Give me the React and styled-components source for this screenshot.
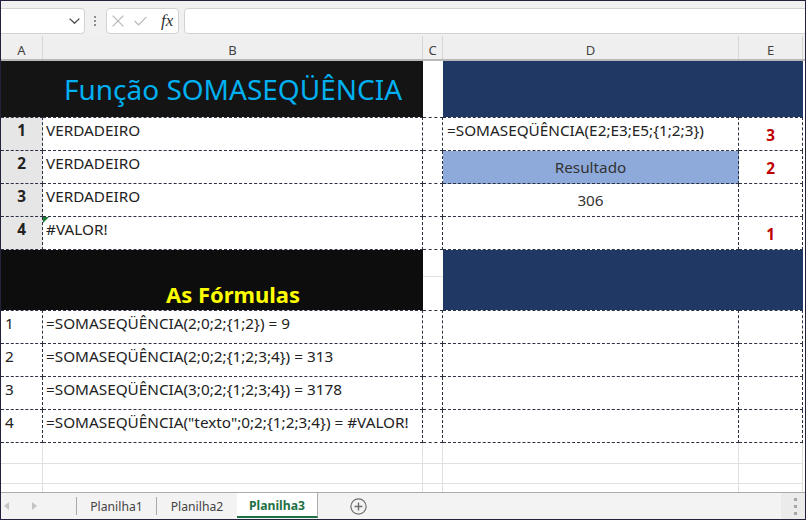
import React from 'react';
import styled, { createGlobalStyle } from 'styled-components';

const COLS = '42px 380px 20px 296px 64px 1fr';
const DASH = '1px dashed #2b3140';
const GRID = '1px solid #e0e0e0';

const Global = createGlobalStyle`
  html, body { margin: 0; padding: 0; background: #ffffff; }
  body { font-family: "Noto Sans", "Open Sans", sans-serif; }
  *, *::before, *::after { box-sizing: border-box; }
`;

const Window = styled.div`
  width: 806px;
  height: 520px;
  border: 1px solid #22223d;
  background: #ffffff;
  display: flex;
  flex-direction: column;
  overflow: hidden;
`;

/* ---------- formula bar ---------- */
const FormulaBar = styled.div`
  flex: none;
  height: 35px;
  background: #f0f0f0;
  display: flex;
  align-items: flex-start;
  padding-top: 7px;
  overflow: hidden;
`;

const NameBox = styled.div`
  flex: none;
  width: 90px;
  height: 26px;
  margin-left: -6px;
  background: #ffffff;
  border: 1px solid #d2d2d2;
  border-radius: 4px;
  display: flex;
  align-items: center;
  justify-content: flex-end;
  padding-right: 4px;
`;

const Grip = styled.div`
  flex: none;
  width: 2px;
  height: 26px;
  margin: 0 10px 0 9px;
  display: flex;
  flex-direction: column;
  justify-content: center;
  gap: 2px;
  & > span { display: block; width: 2px; height: 2px; background: #8c8c8c; }
`;

const FxBox = styled.div`
  flex: none;
  width: 73px;
  height: 26px;
  background: #ffffff;
  border: 1px solid #d2d2d2;
  border-radius: 4px;
  display: flex;
  align-items: center;
  padding-left: 5px;
`;

const FxLabel = styled.span`
  font-family: "Liberation Serif", "DejaVu Serif", serif;
  font-style: italic;
  font-size: 17px;
  color: #333333;
  margin-left: 14px;
  line-height: 1;
  margin-top: -2px;
`;

const InputBox = styled.div`
  flex: 1;
  height: 26px;
  margin-left: 5px;
  margin-right: -10px;
  background: #ffffff;
  border: 1px solid #d2d2d2;
  border-radius: 4px;
`;

/* ---------- column headers ---------- */
const HeaderRow = styled.div`
  flex: none;
  display: grid;
  grid-template-columns: ${COLS};
  height: 25px;
  background: #efefef;
  border-bottom: 2px solid #b9b9b9;
`;

const HeaderCell = styled.div`
  text-align: center;
  font-size: 13px;
  line-height: 18px;
  padding-top: 5px;
  color: #444444;
  border-right: ${p => (p.$last ? 'none' : '1px solid #d6d6d6')};
`;

/* ---------- sheet ---------- */
const Sheet = styled.div`
  flex: 1;
  overflow: hidden;
  display: flex;
  flex-direction: column;
`;

const Row = styled.div`
  flex: none;
  display: grid;
  grid-template-columns: ${COLS};
  height: ${p => p.$h}px;
`;

const lineFor = l => (l === 'dash' ? DASH : l === 'grid' ? GRID : 'none');

const Cell = styled.div`
  position: relative;
  min-width: 0;
  background: ${p => p.$bg || 'transparent'};
  border-right: ${p => lineFor(p.$line)};
  border-bottom: ${p => lineFor(p.$bottom || p.$line)};
  border-top: ${p => (p.$top ? DASH : 'none')};
  font-size: 15.3px;
  line-height: 20px;
  color: #222222;
  padding: 2px 0 0 3px;
  white-space: nowrap;
  ${p => (p.$span ? `grid-column: span ${p.$span};` : '')}
`;

const IndexCell = styled(Cell)`
  background: #e7e6e6;
  font-weight: 700;
  text-align: center;
  padding-left: 0;
`;

const NumCell = styled(Cell)`
  padding-left: 4px;
`;

const FormulaCell = styled(Cell)`
  padding-left: 4px;
`;

const CenterCell = styled(Cell)`
  display: flex;
  align-items: center;
  justify-content: center;
  padding: 0;
  color: #333333;
`;

const MarkCell = styled(CenterCell)`
  color: #c00000;
  font-weight: 700;
  padding-top: 2px;
`;

const ErrorCell = styled(Cell)`
  &::before {
    content: '';
    position: absolute;
    left: 0;
    top: 0;
    border-top: 6px solid #1e7b34;
    border-right: 6px solid transparent;
  }
`;

const TitleCell = styled.div`
  background: #141414;
  display: flex;
  align-items: center;
  justify-content: center;
  font-size: 28px;
  color: #00b0f0;
  white-space: nowrap;
`;

const BlackCell = styled.div`
  background: ${p => p.$bg || '#141414'};
  ${p => (p.$span ? `grid-column: span ${p.$span};` : '')}
`;

const NavyCell = styled.div`
  background: #203864;
  grid-column: span 2;
`;

const GapCell = styled.div`
  background: #ffffff;
  border-bottom: ${p => (p.$grid ? GRID : 'none')};
`;

const HeadingCell = styled.div`
  background: #0d0d0d;
  display: flex;
  align-items: flex-end;
  justify-content: center;
  padding-bottom: 1px;
  font-size: 22px;
  font-weight: 700;
  color: #ffff00;
  white-space: nowrap;
`;

/* ---------- sheet tabs ---------- */
const TabBar = styled.div`
  flex: none;
  height: 27px;
  background: #f3f3f3;
  border-top: 1px solid #ababab;
  display: flex;
  align-items: stretch;
`;

const NavArea = styled.div`
  flex: none;
  width: 75px;
  display: flex;
  align-items: center;
  padding-left: 3px;
  gap: 23px;
`;

const Sep = styled.div`
  flex: none;
  width: 1px;
  height: 18px;
  align-self: center;
  background: #a8a8a8;
`;

const Tab = styled.div`
  flex: none;
  width: ${p => p.$w}px;
  display: flex;
  align-items: center;
  justify-content: center;
  font-size: 12.2px;
  color: #444444;
  white-space: nowrap;
`;

const ActiveTab = styled(Tab)`
  background: #ffffff;
  color: #1e7145;
  font-weight: 700;
  border-right: 1px solid #ababab;
  border-bottom: 2px solid #1e7145;
  margin-bottom: 1px;
  padding-top: 1px;
`;

const AddButton = styled.div`
  flex: none;
  margin-left: 32px;
  display: flex;
  align-items: center;
`;

const Corner = styled.div`
  flex: none;
  margin-left: auto;
  width: 24px;
  background: #ebebeb;
  display: flex;
  flex-direction: column;
  justify-content: center;
  align-items: flex-start;
  padding-left: 13px;
  gap: 4px;
  & > span { display: block; width: 3px; height: 3px; background: #a6a6a6; }
`;

const Tri = ({ dir }) => (
  <svg width="5" height="8" viewBox="0 0 5 8">
    {dir === 'left' ? (
      <path d="M5 0 L0 4 L5 8 Z" fill="#c4c4c4" />
    ) : (
      <path d="M0 0 L5 4 L0 8 Z" fill="#c4c4c4" />
    )}
  </svg>
);

const sectionOne = [
  { n: '1', b: 'VERDADEIRO', d: '=SOMASEQÜÊNCIA(E2;E3;E5;{1;2;3})', dk: 'formula', e: '3' },
  { n: '2', b: 'VERDADEIRO', d: 'Resultado', dk: 'result', e: '2' },
  { n: '3', b: 'VERDADEIRO', d: '306', dk: 'center', e: '' },
  { n: '4', b: '#VALOR!', d: '', dk: 'formula', e: '1', err: true },
];

const formulas = [
  '=SOMASEQÜÊNCIA(2;0;2;{1;2}) = 9',
  '=SOMASEQÜÊNCIA(2;0;2;{1;2;3;4}) = 313',
  '=SOMASEQÜÊNCIA(3;0;2;{1;2;3;4}) = 3178',
  '=SOMASEQÜÊNCIA("texto";0;2;{1;2;3;4}) = #VALOR!',
];

const DCell = ({ row, top }) => {
  if (row.dk === 'result')
    return <CenterCell $line="dash" $top={top} $bg="#8eaadb">{row.d}</CenterCell>;
  if (row.dk === 'center')
    return <CenterCell $line="dash" $top={top}>{row.d}</CenterCell>;
  return <FormulaCell $line="dash" $top={top}>{row.d}</FormulaCell>;
};

export default function App() {
  return (
    <>
      <Global />
      <Window>
        <FormulaBar>
          <NameBox>
            <svg width="11" height="6" viewBox="0 0 11 6">
              <path d="M0.6 0.6 L5.5 5.2 L10.4 0.6" fill="none" stroke="#444" strokeWidth="1.3" />
            </svg>
          </NameBox>
          <Grip><span /><span /><span /></Grip>
          <FxBox>
            <svg width="12" height="12" viewBox="0 0 12 12">
              <path d="M0.6 0.6 L11.4 11.4 M11.4 0.6 L0.6 11.4" stroke="#b8b8b8" strokeWidth="1.2" fill="none" />
            </svg>
            <svg width="13" height="10" viewBox="0 0 13 10" style={{ marginLeft: 10 }}>
              <path d="M0.6 5 L4.6 9 L12.4 0.8" stroke="#b8b8b8" strokeWidth="1.2" fill="none" />
            </svg>
            <FxLabel>fx</FxLabel>
          </FxBox>
          <InputBox />
        </FormulaBar>

        <HeaderRow>
          <HeaderCell>A</HeaderCell>
          <HeaderCell>B</HeaderCell>
          <HeaderCell>C</HeaderCell>
          <HeaderCell>D</HeaderCell>
          <HeaderCell>E</HeaderCell>
          <HeaderCell $last />
        </HeaderRow>

        <Sheet>
          <Row $h={56}>
            <BlackCell />
            <TitleCell>Função SOMASEQÜÊNCIA</TitleCell>
            <GapCell />
            <NavyCell />
          </Row>

          {sectionOne.map((r, i) => {
            const top = i === 0;
            const BCell = r.err ? ErrorCell : Cell;
            return (
              <Row key={r.n} $h={top ? 34 : 33}>
                <IndexCell $line="dash" $top={top}>{r.n}</IndexCell>
                <BCell $line="dash" $top={top}>{r.b}</BCell>
                <Cell $line="dash" $top={top} />
                <DCell row={r} top={top} />
                <MarkCell $line="dash" $top={top}>{r.e}</MarkCell>
              </Row>
            );
          })}

          <Row $h={27}>
            <BlackCell $bg="#0d0d0d" $span={2} />
            <GapCell $grid />
            <NavyCell />
          </Row>
          <Row $h={33}>
            <BlackCell $bg="#0d0d0d" />
            <HeadingCell>As Fórmulas</HeadingCell>
            <GapCell />
            <NavyCell />
          </Row>

          {formulas.map((f, i) => {
            const top = i === 0;
            return (
              <Row key={f} $h={top ? 34 : 33}>
                <NumCell $line="dash" $top={top}>{i + 1}</NumCell>
                <Cell $line="dash" $top={top}>{f}</Cell>
                <Cell $line="dash" $top={top} />
                <Cell $line="dash" $top={top} />
                <Cell $line="dash" $top={top} />
              </Row>
            );
          })}

          {[21, 20, 20, 20].map((h, i) => (
            <Row key={i} $h={h}>
              <Cell $line="grid" />
              <Cell $line="grid" />
              <Cell $line="grid" />
              <Cell $line="grid" />
              <Cell $line="grid" />
            </Row>
          ))}
        </Sheet>

        <TabBar>
          <NavArea>
            <Tri dir="left" />
            <Tri dir="right" />
          </NavArea>
          <Sep />
          <Tab $w={79}>Planilha1</Tab>
          <Sep />
          <Tab $w={80}>Planilha2</Tab>
          <ActiveTab $w={81}>Planilha3</ActiveTab>
          <AddButton>
            <svg width="17" height="17" viewBox="0 0 17 17">
              <circle cx="8.5" cy="8.5" r="7.6" fill="none" stroke="#6e6e6e" strokeWidth="1.2" />
              <path d="M8.5 4.6 V12.4 M4.6 8.5 H12.4" stroke="#6e6e6e" strokeWidth="1.4" />
            </svg>
          </AddButton>
          <Corner><span /><span /><span /></Corner>
        </TabBar>
      </Window>
    </>
  );
}
